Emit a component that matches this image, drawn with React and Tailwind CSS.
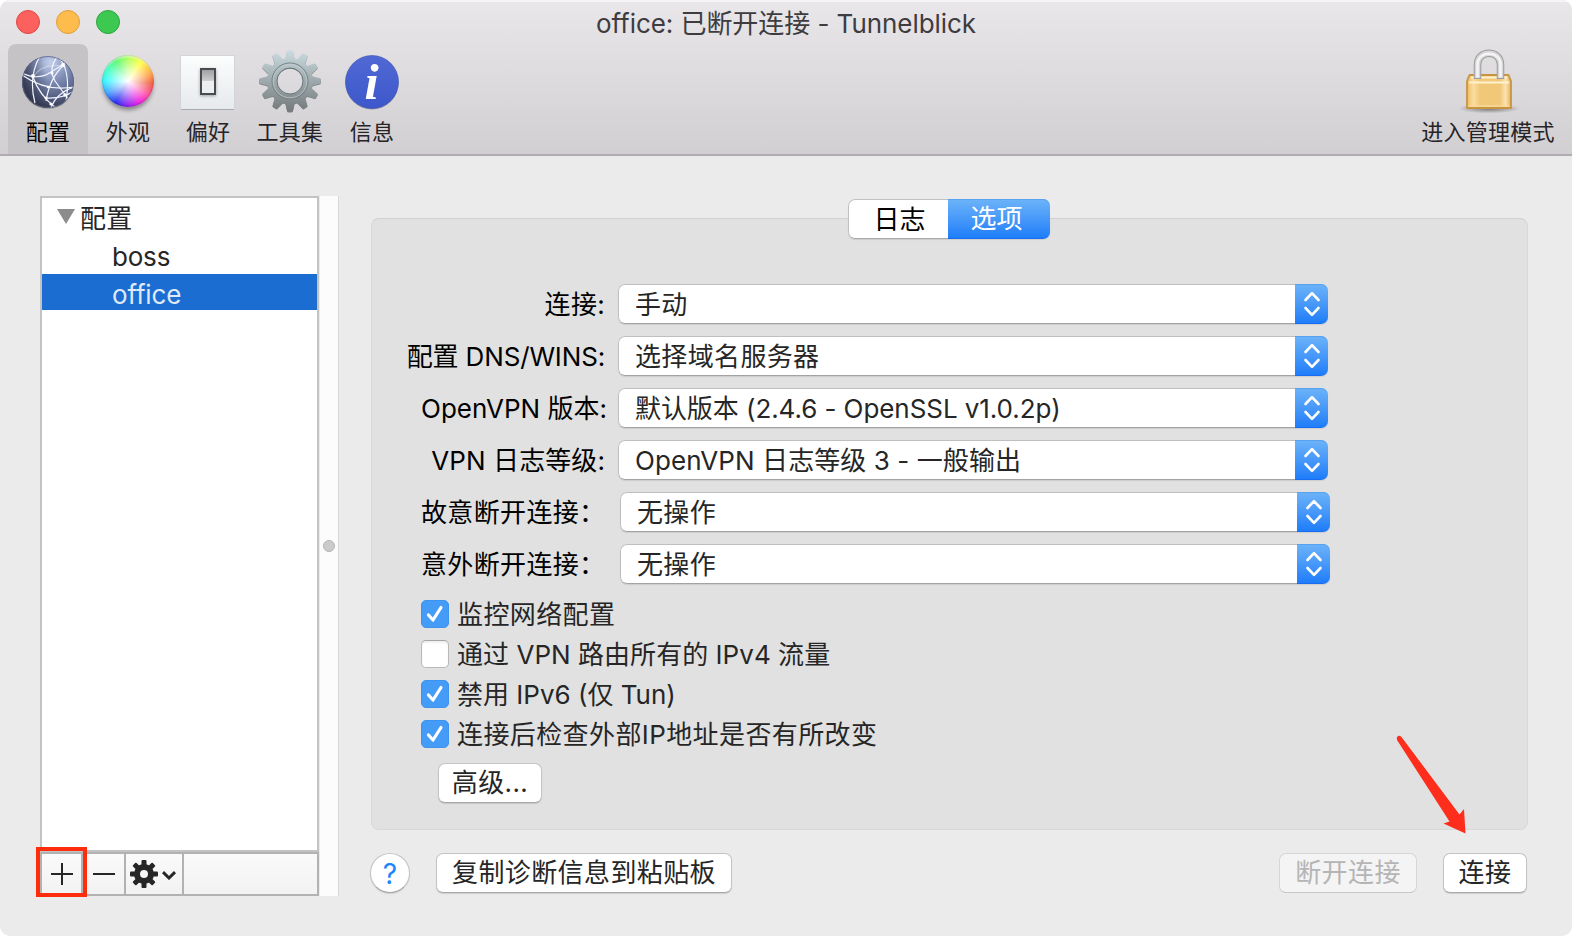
import React from "react";

const TEETH = Array.from({ length: 12 }, (_, i) => i * 30);
const SMALL_TEETH = Array.from({ length: 8 }, (_, i) => i * 45);

function GlobeIcon() {
  return (
    <svg width="56" height="62" viewBox="0 0 56 62">
      <defs>
        <radialGradient id="globe" cx="0.55" cy="0.12" r="0.95">
          <stop offset="0" stopColor="#c3cfec" />
          <stop offset="0.4" stopColor="#7c8ab2" />
          <stop offset="0.75" stopColor="#505a7c" />
          <stop offset="1" stopColor="#2e2f42" />
        </radialGradient>
        <linearGradient id="globeShade" x1="0" y1="0.6" x2="1" y2="0.4">
          <stop offset="0" stopColor="#1c1c2c" stopOpacity="0.6" />
          <stop offset="0.5" stopColor="#1c1c2c" stopOpacity="0" />
        </linearGradient>
        <clipPath id="globeClip">
          <circle cx="28" cy="31" r="26" />
        </clipPath>
      </defs>
      <circle cx="28" cy="32" r="26" fill="#000" opacity="0.2" />
      <circle cx="28" cy="31" r="26" fill="url(#globe)" />
      <circle cx="28" cy="31" r="26" fill="url(#globeShade)" />
      <g clipPath="url(#globeClip)" fill="none" stroke="#f3f6ff" strokeWidth="1.200">
        <path d="M2 22Q18 30 31 21Q38 17 45 12" />
        <path d="M2 24Q26 41 54 36" />
        <path d="M20 5Q8 26 15 52" />
        <path d="M37 6Q28 18 35 30Q42 40 50 50" />
        <path d="M40 8Q51 22 46 50" />
        <path d="M13 26Q19 44 36 57" />
        <path d="M44 14Q30 26 26 50" />
        <path d="M54 36Q36 42 31 57" />
        <path d="M26 47Q42 48 54 40" />
        <path d="M13 26Q24 10 46 16" opacity="0.4" />
      </g>
      <g fill="#fff">
        <circle cx="13" cy="25" r="2" />
        <circle cx="43" cy="14" r="2" />
        <circle cx="32" cy="22" r="1.500" />
        <circle cx="28" cy="36" r="1.300" />
        <circle cx="45" cy="44" r="1.800" />
        <circle cx="26" cy="47" r="1.500" />
        <circle cx="31" cy="53" r="1.600" />
      </g>
      <circle cx="28" cy="31" r="25.500" fill="none" stroke="#5a6486" strokeWidth="0.800" />
    </svg>
  );
}

function ColorWheel() {
  return (
    <div className="mb-0.5 size-[52px] rounded-full bg-[radial-gradient(circle,#fff_0%,#ffffffb0_22%,#ffffff00_68%),conic-gradient(#a8ff50,#ffff38_35deg,#ff9a40_75deg,#f0603c_95deg,#ff4ea0_125deg,#f020e0_150deg,#9020f0_180deg,#2a30f0_210deg,#40a0ff_240deg,#30f8ff_270deg,#40ffc0_300deg,#50f868_330deg,#a8ff50)] shadow-[0_4px_4px_-1px_#00000066,inset_0_0_2px_#00000066,inset_0_3px_2px_-1px_#ffffffb0]" />
  );
}

function SwitchIcon() {
  return (
    <div className="mr-px flex size-[55px] items-center justify-center rounded-[2px] border border-[#d2d4d6] border-b-[#a8abad] bg-linear-to-b from-[#fcfdfd] to-[#e6eaed]">
      <div className="mb-0.5 h-[27px] w-4 border-2 border-[#4a4b4f] bg-linear-to-b from-[#9fa1a4] via-[#c9cbcd] via-45% to-[#eceef0] to-50% shadow-[0_1px_3px_#00000055]" />
    </div>
  );
}

function ToolsGear() {
  return (
    <svg width="64" height="64" viewBox="-32 -32 64 64" className="mb-0.5">
      <defs>
        <linearGradient id="steel" gradientUnits="userSpaceOnUse" x1="0" y1="-31" x2="0" y2="31">
          <stop offset="0" stopColor="#cbdde2" />
          <stop offset="0.5" stopColor="#9da9ac" />
          <stop offset="1" stopColor="#74797a" />
        </linearGradient>
        <mask id="gearMask">
          <g fill="#fff">
            <circle r="23" />
            {TEETH.map((a) => (
              <path key={a} d="M-5 -21L-2.8 -30Q-2.6 -30.8 -1.6 -30.8H1.6Q2.6 -30.8 2.8 -30L5 -21Z" transform={`rotate(${a})`} />
            ))}
          </g>
          <circle r="13" fill="#000" />
        </mask>
      </defs>
      <rect x="-32" y="-31" width="64" height="64" fill="#555b5d" opacity="0.7" mask="url(#gearMask)" transform="translate(0 .7)" />
      <rect x="-32" y="-32" width="64" height="64" fill="url(#steel)" mask="url(#gearMask)" />
      <circle r="18" fill="none" stroke="#748083" strokeWidth="1" />
      <circle r="16.8" fill="none" stroke="#c5cfd2" strokeWidth="1" opacity="0.7" />
      <circle r="13" fill="none" stroke="#69777b" strokeWidth="1" />
    </svg>
  );
}

function InfoIcon() {
  return (
    <svg width="56" height="60" viewBox="0 0 56 60">
      <defs>
        <linearGradient id="info" x1="0" y1="0" x2="0" y2="1">
          <stop offset="0" stopColor="#5069d4" />
          <stop offset="1" stopColor="#3d57cb" />
        </linearGradient>
      </defs>
      <circle cx="28" cy="31" r="26.500" fill="#3b3f60" opacity="0.4" />
      <circle cx="28" cy="30" r="26.500" fill="url(#info)" stroke="#3b50b0" strokeWidth="0.600" />
      <text x="27.500" y="47" textAnchor="middle" fill="#fff" className="font-['Liberation_Serif',serif] text-[51px] font-bold italic">
        i
      </text>
    </svg>
  );
}

function LockIcon() {
  return (
    <svg width="64" height="66" viewBox="0 0 64 66" className="ml-0.5">
      <defs>
        <linearGradient id="brass" x1="0" y1="0" x2="1" y2="0">
          <stop offset="0" stopColor="#efbd66" />
          <stop offset="0.15" stopColor="#fbdda0" />
          <stop offset="0.3" stopColor="#f0c877" />
          <stop offset="0.75" stopColor="#f0c877" />
          <stop offset="0.88" stopColor="#fce3b2" />
          <stop offset="1" stopColor="#e7b057" />
        </linearGradient>
        <radialGradient id="lockShadow">
          <stop offset="0" stopColor="#000" stopOpacity="0.45" />
          <stop offset="1" stopColor="#000" stopOpacity="0" />
        </radialGradient>
      </defs>
      <ellipse cx="32" cy="59.500" rx="31" ry="5" fill="url(#lockShadow)" />
      <path d="M12.500 26H51.500L54 32V59H10V32Z" fill="url(#brass)" stroke="#c89442" strokeWidth="1.800" strokeLinejoin="round" />
      <path d="M14 28.500H50M12 33.500H52" stroke="#fff1d0" strokeWidth="1.800" />
      <path d="M11.500 57H52.500" stroke="#f8d99a" strokeWidth="1.500" />
      <path d="M20.500 30V15.500C20.500 0.500 43.500 0.500 43.500 15.500V30" fill="none" stroke="#9b9b9b" strokeWidth="7.500" />
      <path d="M20.500 29V15.500C20.500 0.500 43.500 0.500 43.500 15.500V29" fill="none" stroke="#d6d6d6" strokeWidth="5.500" />
      <path d="M20.500 28.500V15.500C20.500 1 43.500 1 43.500 15.500V28.500" fill="none" stroke="#f4f4f4" strokeWidth="2.500" />
    </svg>
  );
}

function ToolItem({ label, width, active, children }) {
  return (
    <div className={`flex h-[110px] flex-col items-center ${width} ${active ? "rounded-t-lg bg-[#c5c3c6]" : ""}`}>
      <div className="flex h-[76px] w-full items-center justify-center">{children}</div>
      <div className={`-mt-0.5 text-[22px] leading-7 tracking-[0.25px] whitespace-nowrap ${active ? "text-black" : "text-[#262427]"}`}>{label}</div>
    </div>
  );
}

function Stepper() {
  return (
    <div className="flex h-10 w-[33px] shrink-0 items-center justify-center rounded-r-[7px] border-b border-[#1a6df2] bg-linear-to-b from-[#6cb3f8] to-[#1d7df9] shadow-[inset_0_1px_0_#56a2f0]">
      <svg width="18" height="28" viewBox="0 0 18 28" fill="none" stroke="#fff" strokeWidth="2.600" strokeLinecap="round" strokeLinejoin="round">
        <path d="M2.500 10L9 3.200L15.500 10M2.500 18L9 24.800L15.500 18" />
      </svg>
    </div>
  );
}

function SelectRow({ label, value, labelClass = "", valueClass = "tracking-[0.35px]", late }) {
  return (
    <div className="flex h-[52px] items-start">
      <div className={`flex h-10 shrink-0 items-center pt-0.5 whitespace-pre text-black ${late ? "w-[248px] pl-[49px]" : "w-[246px] justify-end pr-[13px]"}`}>
        <span className={labelClass}>{label}</span>
      </div>
      <div className="flex h-10 w-[710px] rounded-[7px] bg-white shadow-[0_1px_1px_#00000018]">
        <div className="flex flex-1 items-center rounded-l-[7px] border border-r-0 border-[#bfbfbf] border-b-[#a3a3a3] pt-0.5 pl-4 whitespace-nowrap text-[#262626]">
          <span className={valueClass}>{value}</span>
        </div>
        <Stepper />
      </div>
    </div>
  );
}

function CheckRow({ label, checked, textClass = "" }) {
  return (
    <div className="flex h-10 items-start">
      {checked ? (
        <div className="flex size-7 items-center justify-center rounded-[5px] border border-[#3d93f0] bg-[#459cf7]">
          <svg width="20" height="20" viewBox="0 0 20 20" fill="none" stroke="#fff" strokeWidth="3.200" strokeLinecap="round" strokeLinejoin="round">
            <path d="M3.500 11L8 16L16 3.500" />
          </svg>
        </div>
      ) : (
        <div className="size-7 rounded-[5px] border border-[#b8b8b8] border-t-[#a5a5a5] bg-white shadow-[inset_0_2px_2px_#00000010]" />
      )}
      <div className="ml-2 flex h-[30px] items-center whitespace-nowrap text-[#262626]">
        <span className={textClass}>{label}</span>
      </div>
    </div>
  );
}

function PushButton({ children, className = "", disabled }) {
  return (
    <div
      className={`flex h-10 items-center justify-center rounded-[7px] border tracking-[0.4px] whitespace-nowrap ${
        disabled
          ? "border-[#d6d6d6] border-b-[#c8c8c8] bg-[#f4f4f4] text-[#b5b5b5]"
          : "border-[#c4c4c4] border-b-[#a8a8a8] bg-white text-[#262626] shadow-[0_1px_1px_#00000020]"
      } ${className}`}
    >
      {children}
    </div>
  );
}

function Toolbar() {
  return (
    <header className="h-[156px] border-b-2 border-[#aeacae] bg-linear-to-b from-[#e9e7ea] to-[#d1cfd2] shadow-[inset_0_2px_0_#f5f4f6]">
      <div className="relative flex h-11 items-center pl-4">
        <div className="flex gap-4">
          <div className="size-6 rounded-full border border-[#df4744] bg-[#fc615d]" />
          <div className="size-6 rounded-full border border-[#dd9f3c] bg-[#fdbc4b]" />
          <div className="size-6 rounded-full border border-[#2aa53c] bg-[#3dc951]" />
        </div>
        <div className="absolute inset-x-0 top-[5px] text-center text-[26px] leading-[38px] tracking-[-0.06px] text-[#3e3c3f]">office: 已断开连接 - Tunnelblick</div>
      </div>
      <div className="flex pr-[13px] pl-2">
        <ToolItem label="配置" width="w-20" active>
          <GlobeIcon />
        </ToolItem>
        <ToolItem label="外观" width="w-20">
          <ColorWheel />
        </ToolItem>
        <ToolItem label="偏好" width="w-20">
          <SwitchIcon />
        </ToolItem>
        <ToolItem label="工具集" width="w-[84px]">
          <ToolsGear />
        </ToolItem>
        <ToolItem label="信息" width="w-20">
          <InfoIcon />
        </ToolItem>
        <div className="flex-1" />
        <ToolItem label="进入管理模式" width="w-[142px]">
          <LockIcon />
        </ToolItem>
      </div>
    </header>
  );
}

function Sidebar() {
  return (
    <aside className="flex h-[700px] w-[299px]">
      <div className="relative flex w-[279px] flex-col">
        <div className="h-[656px] border-2 border-[#c3c3c3] bg-white text-[#262626]">
          <div className="flex h-10 items-center pl-[15px]">
            <svg width="18" height="15" viewBox="0 0 18 15" className="mb-1">
              <path d="M0 0H18L9 15Z" fill="#8c8c8c" />
            </svg>
            <span className="ml-[5px] pt-0.5 tracking-[0.35px]">配置</span>
          </div>
          <div className="flex h-9 items-center pt-0.5 pl-[70px] tracking-[-0.2px]">boss</div>
          <div className="flex h-9 items-center bg-[#1c6dd2] pt-1.5 pl-[70px] tracking-[-0.15px] text-[#dfe9f8]">office</div>
        </div>
        <div className="flex h-11 border-2 border-[#b2b2b2] bg-linear-to-b from-[#fafafa] to-[#f2f2f2]">
          <div className="flex w-[41px] items-center justify-center border-r-2 border-[#b2b2b2]">
            <svg width="22" height="22" viewBox="0 0 22 22" stroke="#262626" strokeWidth="2">
              <path d="M0 11H22M11 0V22" />
            </svg>
          </div>
          <div className="flex w-[43px] items-center justify-center border-r-2 border-[#b2b2b2]">
            <svg width="22" height="22" viewBox="0 0 22 22" stroke="#262626" strokeWidth="2">
              <path d="M0 11H22" />
            </svg>
          </div>
          <div className="flex w-[58px] items-center border-r-2 border-[#b2b2b2] pl-1">
            <svg width="28" height="28" viewBox="-14 -14 28 28">
              <g fill="#262626">
                {SMALL_TEETH.map((a) => (
                  <rect key={a} x="-2.500" y="-14" width="5" height="7" rx="1" transform={`rotate(${a})`} />
                ))}
              </g>
              <circle r="7" fill="none" stroke="#262626" strokeWidth="6" />
            </svg>
            <svg width="14" height="9" viewBox="0 0 14 9" className="mt-0.5 ml-1" fill="none" stroke="#262626" strokeWidth="3">
              <path d="M1 1.200L7 7L13 1.200" />
            </svg>
          </div>
        </div>
        <div className="absolute top-[651px] left-[-4.500px] h-[50px] w-[51px] border-4 border-[#ff2d0b]" />
      </div>
      <div className="ml-px flex w-[19px] items-center justify-center border-r border-[#d8d8d8] bg-[#fcfcfc]">
        <div className="size-3 rounded-full border border-[#b5b5b5] bg-[#cbcbcb]" />
      </div>
    </aside>
  );
}

function OptionsPanel() {
  return (
    <section className="mt-[22px] h-[612px] w-[1157px] rounded-lg border border-[#d8d8d8] border-t-[#d0d0d0] bg-[#e1e1e1]">
      <div className="-mt-5 flex justify-center pr-0.5">
        <div className="flex h-10 w-[202px] rounded-[7px] bg-white shadow-[0_1px_1px_#00000018]">
          <div className="flex w-[100px] items-center justify-center rounded-l-[7px] border border-r-0 border-[#c0c0c0] border-b-[#a8a8a8] text-black">
            <span className="pt-px pl-[3px]">日志</span>
          </div>
          <div className="flex h-10 flex-1 items-center justify-center rounded-r-[7px] border-b border-[#1a6df2] bg-linear-to-b from-[#6cb3f8] to-[#1d7df9] pr-1 text-white shadow-[inset_0_1px_0_#56a2f0]">
            <span className="pt-px">选项</span>
          </div>
        </div>
      </div>
      <div className="mt-[45px]">
        <SelectRow label="连接:" value="手动" labelClass="tracking-[0.3px]" />
        <SelectRow label="配置 DNS/WINS:" value="选择域名服务器" labelClass="tracking-[-0.15px]" />
        <SelectRow label="OpenVPN 版本:" value="默认版本 (2.4.6 - OpenSSL v1.0.2p)" labelClass="-mr-0.5" valueClass="tracking-[-0.07px]" />
        <SelectRow label="VPN 日志等级:" value="OpenVPN 日志等级 3 - 一般输出" labelClass="tracking-[0.08px]" valueClass="tracking-[0.08px]" />
        <SelectRow label="故意断开连接：" value="无操作" labelClass="tracking-[0.35px]" late />
        <SelectRow label="意外断开连接：" value="无操作" labelClass="tracking-[0.35px]" late />
      </div>
      <div className="mt-1 pl-[49px]">
        <CheckRow label="监控网络配置" textClass="tracking-[0.4px]" checked />
        <CheckRow label="通过 VPN 路由所有的 IPv4 流量" textClass="tracking-[0.04px]" />
        <CheckRow label="禁用 IPv6 (仅 Tun)" checked />
        <CheckRow label="连接后检查外部IP地址是否有所改变" textClass="tracking-[0.4px]" checked />
      </div>
      <PushButton className="mt-[3px] ml-[66px] w-[104px]">高级...</PushButton>
    </section>
  );
}

export default function App() {
  return (
    <div className="h-[936px] w-[1572px] bg-white">
      <div className="relative h-full overflow-hidden rounded-[10px] bg-[#ebebeb] font-['Inter','Noto_Sans_CJK_SC',sans-serif] text-[26px] leading-[38px]" lang="zh-CN">
        <Toolbar />
        <div className="flex pt-10 pl-10">
          <Sidebar />
          <main className="ml-8">
            <OptionsPanel />
            <div className="mt-[23px] flex w-[1156px] items-center">
              <div className="-ml-px flex size-10 items-center justify-center rounded-full border border-[#c4c4c4] border-b-[#a8a8a8] bg-white pt-0.5 text-[28px] text-[#1d86fb] shadow-[0_1px_1px_#00000020]">?</div>
              <PushButton className="ml-[26px] w-[296px]">复制诊断信息到粘贴板</PushButton>
              <div className="flex-1" />
              <PushButton className="w-[138px]" disabled>
                断开连接
              </PushButton>
              <PushButton className="ml-[26px] w-[84px]">连接</PushButton>
            </div>
          </main>
        </div>
        <svg className="absolute top-[734px] left-[1394px]" width="74" height="102" viewBox="1394 734 74 102">
          <path d="M1396.800 737.500Q1398.500 734.500 1401.500 737L1459.500 814.500L1464 809L1465.500 833.500L1443.500 823.500L1449.500 821.500L1397 740Z" fill="#ff2d1b" />
        </svg>
      </div>
    </div>
  );
}
